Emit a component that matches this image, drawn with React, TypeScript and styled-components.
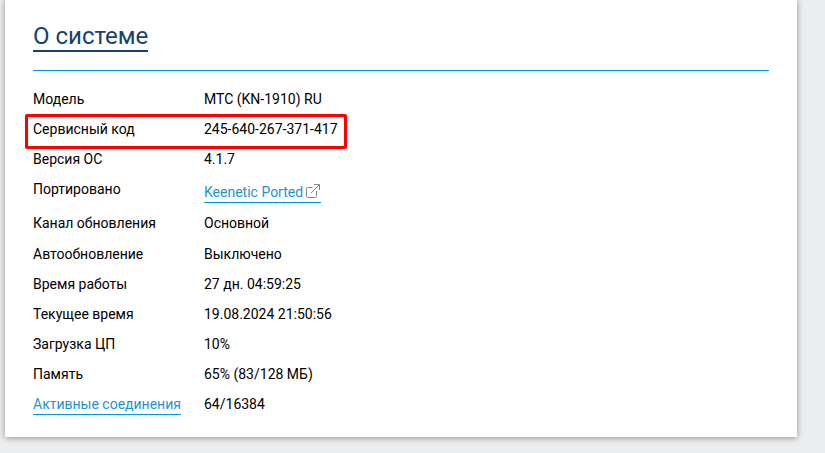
import React from "react";
import styled, { createGlobalStyle } from "styled-components";

const GlobalStyle = createGlobalStyle`
  * { box-sizing: border-box; }
  html, body { margin: 0; height: 100%; }
  body {
    background: #ecedef;
    overflow: hidden;
    font-family: Roboto, sans-serif;
    font-size: 14px;
    color: #000;
  }
`;

const Page = styled.main`
  height: 453px;
  padding: 0 28px 16px 5px;
`;

const Card = styled.section`
  height: 437px;
  padding: 20px 28px 0;
  background: #fff;
  box-shadow: 0 1px 6px rgba(0, 0, 0, 0.4);
`;

const CardHeader = styled.header`
  height: 51px;
  border-bottom: 1px solid #0099dc;
`;

const Title = styled.h1`
  display: inline-block;
  height: 32px;
  margin: 0;
  border-bottom: 2px solid #14446e;
  color: #14446e;
  font-size: 24px;
  font-weight: 400;
  line-height: 32px;
  white-space: nowrap;
`;

const InfoList = styled.dl`
  position: relative;
  margin: 13px 0 0;
`;

const Row = styled.div<{ $height?: number }>`
  display: grid;
  grid-template-columns: 171px 1fr;
  align-items: start;
  height: ${({ $height = 30 }) => $height}px;
  line-height: 30px;
  white-space: nowrap;
`;

const Label = styled.dt`
  margin: 0;
`;

const Value = styled.dd<{ $shift?: number }>`
  margin: 0;
  padding-top: ${({ $shift = 0 }) => $shift}px;
`;

const Link = styled.a`
  display: inline-flex;
  align-items: center;
  height: 21px;
  margin-top: 5px;
  border-bottom: 1px solid #0099dc;
  color: #1a94d6;
  line-height: 20px;
  text-decoration: none;
  vertical-align: top;
`;

const ExternalIcon = styled.svg`
  width: 14px;
  height: 14px;
  margin: 0 1px 2px 3px;
  fill: none;
  stroke: #85858d;
  stroke-linejoin: round;
`;

const Highlight = styled.div`
  position: absolute;
  top: 30px;
  left: -8px;
  width: 322px;
  height: 35px;
  border: 3px solid #ff0000;
  border-radius: 2px;
  pointer-events: none;
`;

interface Entry {
  label: string;
  value: string;
  height?: number;
  shift?: number;
  labelLink?: boolean;
  valueLink?: boolean;
}

const entries: Entry[] = [
  { label: "Модель", value: "МТС (KN-1910) RU" },
  { label: "Сервисный код", value: "245-640-267-371-417" },
  { label: "Версия ОС", value: "4.1.7" },
  { label: "Портировано", value: "Keenetic Ported", height: 34, shift: 3, valueLink: true },
  { label: "Канал обновления", value: "Основной", height: 31 },
  { label: "Автообновление", value: "Выключено" },
  { label: "Время работы", value: "27 дн. 04:59:25" },
  { label: "Текущее время", value: "19.08.2024 21:50:56" },
  { label: "Загрузка ЦП", value: "10%" },
  { label: "Память", value: "65% (83/128 МБ)" },
  { label: "Активные соединения", value: "64/16384", labelLink: true },
];

export default function App() {
  return (
    <>
      <GlobalStyle />
      <Page>
        <Card>
          <CardHeader>
            <Title>О системе</Title>
          </CardHeader>
          <InfoList>
            {entries.map((e) => (
              <Row key={e.label} $height={e.height}>
                <Label>{e.labelLink ? <Link href="#">{e.label}</Link> : e.label}</Label>
                <Value $shift={e.shift}>
                  {e.valueLink ? (
                    <Link href="#">
                      {e.value}
                      <ExternalIcon viewBox="0 0 14 14">
                        <path d="M6.5 3.5h-5a1 1 0 0 0-1 1v8a1 1 0 0 0 1 1h8a1 1 0 0 0 1-1V7M8 .5h5.5V6M13.5.5L5 9" />
                      </ExternalIcon>
                    </Link>
                  ) : (
                    e.value
                  )}
                </Value>
              </Row>
            ))}
            <Highlight />
          </InfoList>
        </Card>
      </Page>
    </>
  );
}
